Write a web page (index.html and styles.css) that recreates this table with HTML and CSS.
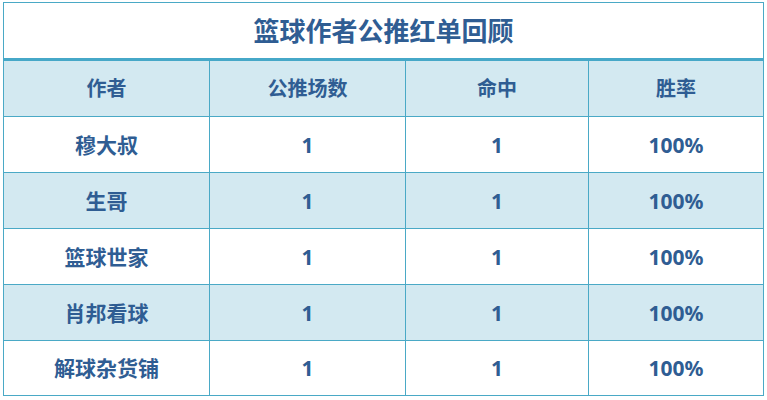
FILE: index.html
```html
<!DOCTYPE html>
<html lang="zh">
<head>
<meta charset="utf-8">
<link rel="stylesheet" href="styles.css">
</head>
<body>
<div class="wrap">
<table class="tbl">
  <colgroup>
    <col class="c1"><col class="c2"><col class="c3"><col class="c4">
  </colgroup>
  <thead>
    <tr class="title"><th colspan="4">篮球作者公推红单回顾</th></tr>
    <tr class="head alt"><th>作者</th><th>公推场数</th><th>命中</th><th>胜率</th></tr>
  </thead>
  <tbody>
    <tr><td>穆大叔</td><td>1</td><td>1</td><td>100%</td></tr>
    <tr class="alt"><td>生哥</td><td>1</td><td>1</td><td>100%</td></tr>
    <tr><td>篮球世家</td><td>1</td><td>1</td><td>100%</td></tr>
    <tr class="alt"><td>肖邦看球</td><td>1</td><td>1</td><td>100%</td></tr>
    <tr class="last"><td>解球杂货铺</td><td>1</td><td>1</td><td>100%</td></tr>
  </tbody>
</table>
</div>
</body>
</html>
```

FILE: styles.css
```css
html, body {
  margin: 0;
  padding: 0;
  background: #ffffff;
}
.wrap {
  padding: 2px 0 0 3px;
}
.tbl {
  width: 760px;
  border-collapse: collapse;
  table-layout: fixed;
  font-family: "Noto Sans", "Noto Sans CJK SC", sans-serif;
  font-weight: 700;
  color: #2f5d93;
}
.c1 { width: 206px; }
.c2 { width: 196px; }
.c3 { width: 183px; }
.c4 { width: 175px; }
.tbl th, .tbl td {
  border: 1px solid #4aa9c6;
  text-align: center;
  padding: 0;
  font-size: 20px;
  line-height: 24px;
}
.tbl td {
  font-size: 21px;
}
.title th {
  height: 55px;
  font-size: 26px;
  border-bottom: 3px solid #46a8c8;
}
.head th {
  height: 55px;
}
.tbl td {
  height: 55px;
}
.last td {
  height: 54px;
}
.alt {
  background: #d3e9f1;
}
```
